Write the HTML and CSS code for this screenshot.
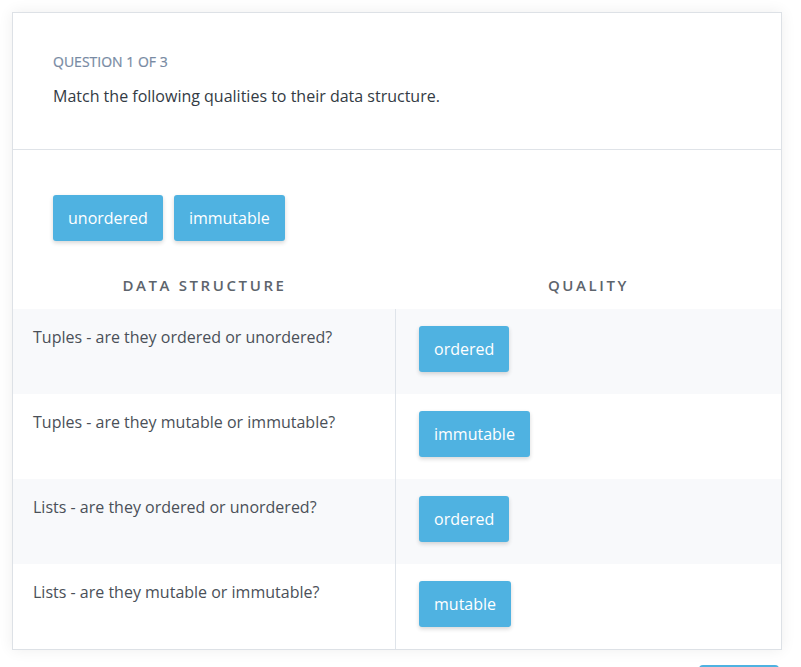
FILE: index.html
```html
<!DOCTYPE html>
<html>
<head>
<meta charset="utf-8">
<link rel="stylesheet" href="styles.css">
</head>
<body>
<div class="page">
  <div class="card">
    <div class="card-head">
      <div class="eyebrow">QUESTION 1 OF 3</div>
      <div class="prompt">Match the following qualities to their data structure.</div>
    </div>
    <div class="card-body">
      <div class="bank">
        <span class="chip">unordered</span>
        <span class="chip">immutable</span>
      </div>
      <div class="table">
        <div class="th">DATA STRUCTURE</div>
        <div class="th th-right">QUALITY</div>
        <div class="td q shade">Tuples - are they ordered or unordered?</div>
        <div class="td a shade"><span class="chip">ordered</span></div>
        <div class="td q">Tuples - are they mutable or immutable?</div>
        <div class="td a"><span class="chip">immutable</span></div>
        <div class="td q shade">Lists - are they ordered or unordered?</div>
        <div class="td a shade"><span class="chip">ordered</span></div>
        <div class="td q">Lists - are they mutable or immutable?</div>
        <div class="td a"><span class="chip">mutable</span></div>
      </div>
    </div>
  </div>
  <div class="actions">
    <button class="submit" aria-label="Submit"></button>
  </div>
</div>
</body>
</html>
```

FILE: styles.css
```css
html, body {
  margin: 0;
  padding: 0;
  background: #ffffff;
}
body {
  font-family: "Open Sans", "Liberation Sans", sans-serif;
  color: #3d444c;
}
.page {
  padding: 12px 19px 0 12px;
}
.card {
  background: #fff;
  border: 1px solid #dde1e6;
  box-shadow: 0 0 14px rgba(0, 0, 0, 0.07);
}
.card-head {
  padding: 40px 40px 42px;
  border-bottom: 1px solid #dfe3e8;
}
.eyebrow {
  font-size: 14px;
  line-height: 18px;
  color: #788aa3;
  font-weight: 400;
  -webkit-text-stroke: 0.2px #788aa3;
}
.prompt {
  margin-top: 14px;
  font-size: 16px;
  line-height: 22px;
  color: #333b44;
}
.card-body {
  padding-top: 45px;
}
.bank {
  display: flex;
  gap: 11px;
  padding: 0 40px;
}
.chip {
  display: inline-flex;
  align-items: center;
  height: 46px;
  padding: 0 15px;
  background: #4fb2e1;
  color: #fff;
  font-size: 16px;
  border-radius: 3px;
  box-shadow: 0 2px 4px rgba(0, 0, 0, 0.16);
  box-sizing: border-box;
}
.table {
  margin-top: 24px;
  display: grid;
  grid-template-columns: 383px 1fr;
}
.th {
  height: 44px;
  box-sizing: border-box;
  padding-bottom: 4px;
  display: flex;
  align-items: center;
  justify-content: center;
  font-size: 15px;
  font-weight: 600;
  letter-spacing: 2.6px;
  color: #5d646c;
}
.td {
  height: 85px;
  box-sizing: border-box;
}
.td.q {
  padding: 17px 20px;
  font-size: 16px;
  line-height: 22px;
  color: #4a5058;
  border-right: 1px solid #dfe4ea;
}
.td.a {
  padding: 17px 23px;
}
.shade {
  background: #f8f9fb;
}
.actions {
  display: flex;
  justify-content: flex-end;
  padding-top: 15px;
  padding-right: 3px;
}
.submit {
  width: 80px;
  height: 40px;
  border: none;
  border-radius: 4px;
  background: #4fb2e1;
}
```
